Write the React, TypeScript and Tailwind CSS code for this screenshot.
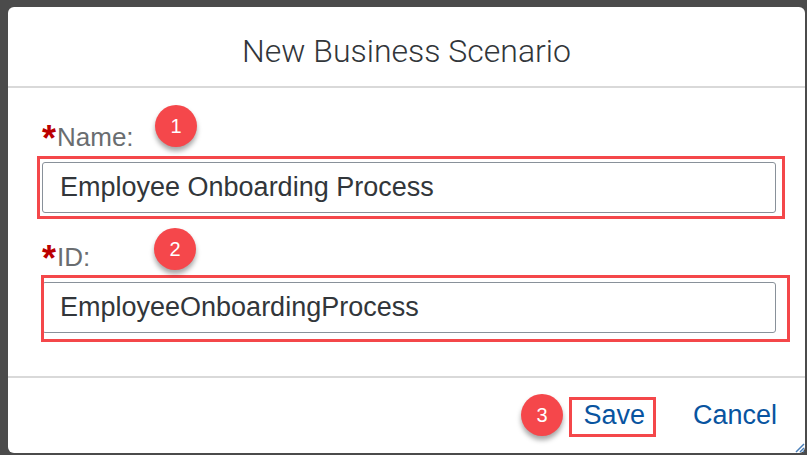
import React from 'react';

const sans = { fontFamily: '"Liberation Sans", Arial, sans-serif' };

function Marker({ n, className }: { n: number; className: string }) {
  return (
    <div
      className={`absolute w-[42px] h-[42px] rounded-full bg-[#f5474b] text-white flex items-center justify-center text-[20px] shadow-[0_4px_5px_rgba(0,0,0,0.35)] ${className}`}
    >
      {n}
    </div>
  );
}

function Field({ label, value }: { label: string; value: string }) {
  return (
    <div className="flex flex-col">
      <div className="h-[32px] flex items-start text-[26px] leading-[32px] text-[#6a6d70]">
        <span className="text-[#bb0000] font-bold text-[36px] leading-[36px] h-[32px] mr-[1px]">*</span>
        <span>{label}</span>
      </div>
      <div className="mt-[9px] h-[51px] border border-[#89919a] rounded-[3px] bg-white flex items-center pl-[17px] text-[27px] text-[#32363a]">
        {value}
      </div>
    </div>
  );
}

export default function App() {
  return (
    <div className="w-[807px] h-[455px] bg-[#4b4b4b] pl-[8px] pt-[7px] pr-[2px] pb-[2px] overflow-hidden" style={sans}>
      <div className="relative w-full h-full bg-white rounded-[6px] flex flex-col">
        {/* header */}
        <div className="h-[79px] flex items-center justify-center border-b-2 border-[#d9d9d9] box-content">
          <h1 className="text-[32px] font-light text-[#32363a] pt-[9px]" style={{ fontFamily: 'Roboto, "Liberation Sans", sans-serif' }}>
            New Business Scenario
          </h1>
        </div>

        {/* content */}
        <div className="flex-1 pl-[34px] pr-[29px] pt-[33px] flex flex-col gap-[28px] border-b-2 border-[#d9d9d9]">
          <Field label="Name:" value="Employee Onboarding Process" />
          <Field label="ID:" value="EmployeeOnboardingProcess" />
        </div>

        {/* footer */}
        <div className="h-[75px] flex items-center justify-end gap-[48px] pr-[28px] text-[27px] text-[#0854a0] pb-[1px]">
          <span>Save</span>
          <span>Cancel</span>
        </div>

        {/* annotations */}
        <div className="absolute left-[29px] top-[149px] w-[748px] h-[63px] border-[3px] border-[#f4474a]" />
        <div className="absolute left-[33px] top-[268px] w-[749px] h-[67px] border-[3px] border-[#f4474a]" />
        <div className="absolute left-[561px] top-[390px] w-[87px] h-[40px] border-[3px] border-[#f4474a]" />
        <Marker n={1} className="left-[147px] top-[98px]" />
        <Marker n={2} className="left-[146px] top-[221px]" />
        <Marker n={3} className="left-[513px] top-[387px]" />

        {/* resize grip */}
        <svg className="absolute right-0 bottom-0" width="12" height="12" viewBox="0 0 12 12">
          <path d="M11 3 L3 11 M11 7 L7 11 M11 10 L10 11" stroke="#4a7fb8" strokeWidth="1.5" />
        </svg>
      </div>
    </div>
  );
}
